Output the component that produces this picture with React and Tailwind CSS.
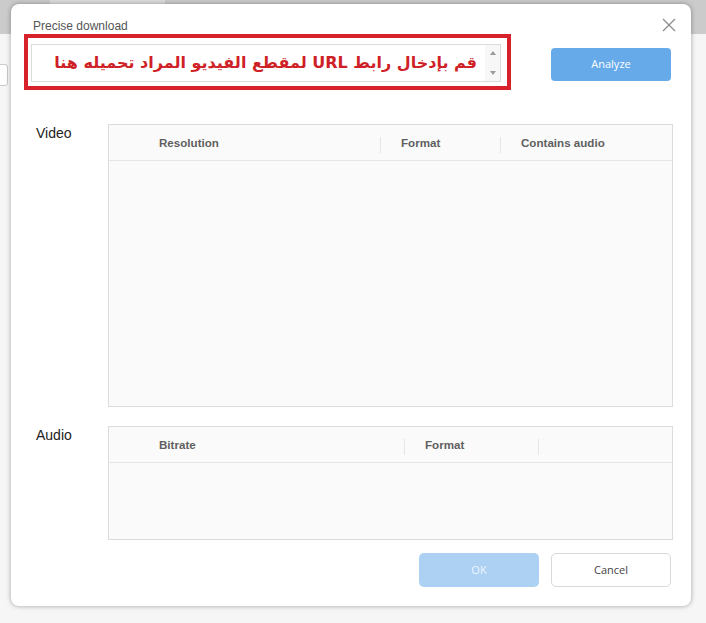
import React from 'react';

const sans = { fontFamily: '"Liberation Sans", Arial, sans-serif' };

function HeaderCell({ label, width, divider = true }) {
  return (
    <div className="relative flex items-center h-full" style={width ? { width } : { flex: 1 }}>
      {divider && <div className="absolute left-0 top-[12px] h-[16px] w-px bg-[#e6e6e6]"></div>}
      {label && (
        <span className="pl-[21px] text-[11.6px] font-bold text-[#5f5f5f]">{label}</span>
      )}
    </div>
  );
}

function DataTable({ height, columns }) {
  return (
    <div className="w-[565px] border border-[#dcdcdc] bg-[#fafafa]" style={{ height }}>
      <div className="flex h-[36px] border-b border-[#e6e6e6]">
        <div className="w-[29px]"></div>
        {columns.map((c, i) => (
          <HeaderCell key={i} label={c.label} width={c.width} divider={i > 0} />
        ))}
      </div>
    </div>
  );
}

export default function App() {
  return (
    <div className="relative w-[706px] h-[623px] overflow-hidden bg-[#f6f6f6]" style={sans}>
      {/* app behind the dialog */}
      <div className="flex h-[34px] bg-[#cbcbcb]">
        <div className="w-[50px]"></div>
        <div className="w-[115px] bg-[#dedede]"></div>
      </div>
      <div className="mt-[30px] ml-[-6px] w-[14px] h-[22px] rounded-[3px] border border-[#c9c9c9] bg-white"></div>

      {/* dialog */}
      <div className="absolute left-[11px] top-[4px] w-[680px] h-[602px] rounded-[8px] bg-white shadow-[0_0_5px_rgba(0,0,0,0.35)] flex flex-col">
        <div className="pl-[22px] pt-[14px] text-[12px] leading-[16px] text-[#555]">Precise download</div>
        <button className="absolute left-[651px] top-[14px] w-[14px] h-[14px]">
          <svg viewBox="0 0 14 14" width="14" height="14" stroke="#8c8c8c" strokeWidth="1.3" fill="none">
            <path d="M1 1 L13 13 M13 1 L1 13" />
          </svg>
        </button>

        <div className="flex">
          <div className="ml-[13px] w-[487px] h-[56px] border-[4px] border-[#d8222b] pl-[3px] pt-[6px]">
            <div className="flex w-[470px] h-[38px] border border-[#dcdcdc] bg-white">
              <div
                dir="rtl"
                className="flex-1 min-w-0 overflow-hidden flex items-center pr-[8px] text-[16px] font-bold text-[#cf1f27] whitespace-nowrap"
                style={{ fontFamily: '"DejaVu Sans", sans-serif' }}
              >
                قم بإدخال رابط URL لمقطع الفيديو المراد تحميله هنا
              </div>
              <div className="w-[15px] shrink-0 flex flex-col items-center justify-between py-[6px] bg-[#f7f7f7]">
                <svg width="6" height="4" viewBox="0 0 6 4"><path d="M0 4 L3 0 L6 4 Z" fill="#9a9a9a" /></svg>
                <svg width="6" height="4" viewBox="0 0 6 4"><path d="M0 0 L3 4 L6 0 Z" fill="#9a9a9a" /></svg>
              </div>
            </div>
          </div>
          <button
            className="ml-[40px] mt-[14px] w-[120px] h-[33px] rounded-[4px] bg-[#67aaea] text-white text-[11px]"
            style={{ fontFamily: '"Open Sans", sans-serif' }}
          >
            Analyze
          </button>
        </div>

        <div className="flex mt-[34px]">
          <div className="w-[97px] pl-[25px] text-[14px] leading-[18px] text-[#222]">Video</div>
          <DataTable
            height={283}
            columns={[
              { label: 'Resolution', width: 242 },
              { label: 'Format', width: 120 },
              { label: 'Contains audio' },
            ]}
          />
        </div>

        <div className="flex mt-[19px]">
          <div className="w-[97px] pl-[25px] text-[14px] leading-[18px] text-[#222]">Audio</div>
          <DataTable
            height={114}
            columns={[
              { label: 'Bitrate', width: 266 },
              { label: 'Format', width: 134 },
              { label: '' },
            ]}
          />
        </div>

        <div className="flex justify-end gap-[12px] mt-[13px] pr-[20px]" style={{ fontFamily: '"Open Sans", sans-serif' }}>
          <button className="w-[120px] h-[34px] rounded-[5px] bg-[#acd1f3] text-[#eef5fd] text-[11px]">OK</button>
          <button className="w-[120px] h-[34px] rounded-[5px] border border-[#d9d9d9] bg-white text-[#444] text-[11px]">Cancel</button>
        </div>
      </div>
    </div>
  );
}
